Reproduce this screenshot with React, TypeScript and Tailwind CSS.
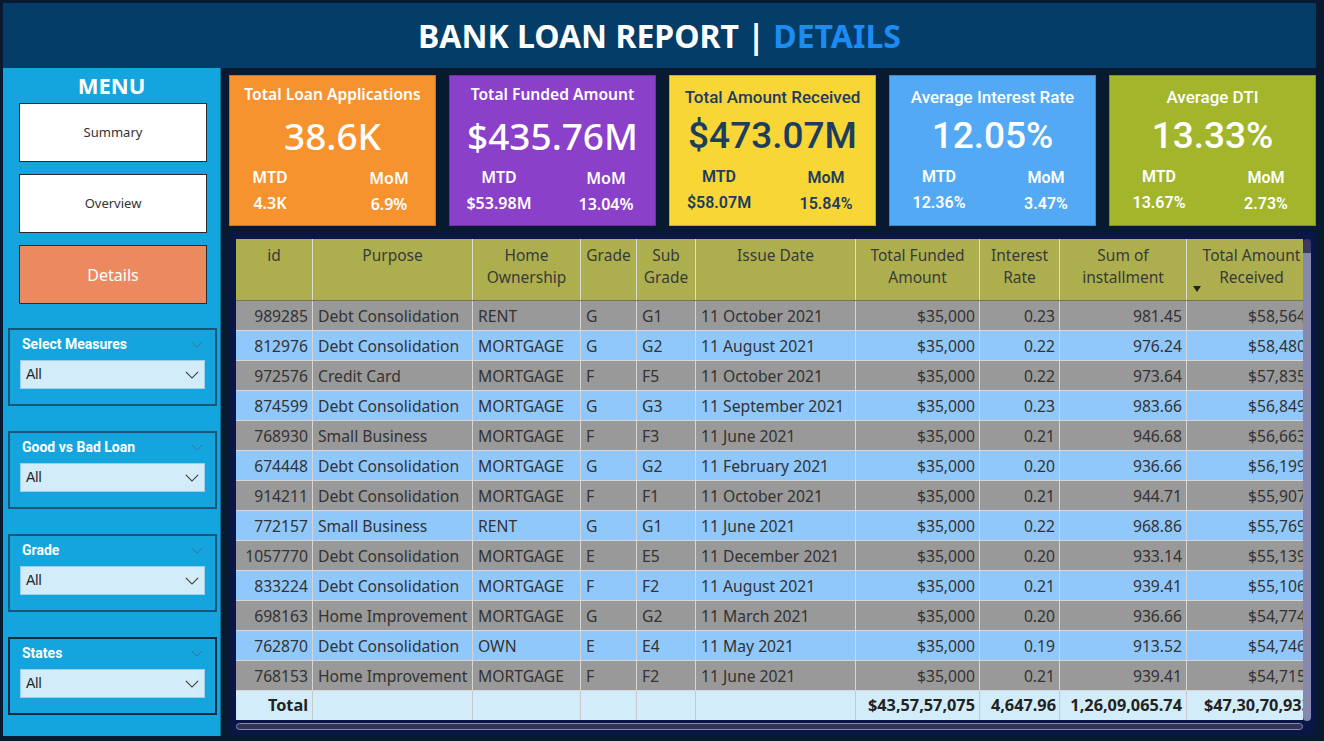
import React from "react";

type Row = [string, string, string, string, string, string, string, string, string, string];

const rows: Row[] = [
  ["989285", "Debt Consolidation", "RENT", "G", "G1", "11 October 2021", "$35,000", "0.23", "981.45", "$58,564"],
  ["812976", "Debt Consolidation", "MORTGAGE", "G", "G2", "11 August 2021", "$35,000", "0.22", "976.24", "$58,480"],
  ["972576", "Credit Card", "MORTGAGE", "F", "F5", "11 October 2021", "$35,000", "0.22", "973.64", "$57,835"],
  ["874599", "Debt Consolidation", "MORTGAGE", "G", "G3", "11 September 2021", "$35,000", "0.23", "983.66", "$56,849"],
  ["768930", "Small Business", "MORTGAGE", "F", "F3", "11 June 2021", "$35,000", "0.21", "946.68", "$56,663"],
  ["674448", "Debt Consolidation", "MORTGAGE", "G", "G2", "11 February 2021", "$35,000", "0.20", "936.66", "$56,199"],
  ["914211", "Debt Consolidation", "MORTGAGE", "F", "F1", "11 October 2021", "$35,000", "0.21", "944.71", "$55,907"],
  ["772157", "Small Business", "RENT", "G", "G1", "11 June 2021", "$35,000", "0.22", "968.86", "$55,769"],
  ["1057770", "Debt Consolidation", "MORTGAGE", "E", "E5", "11 December 2021", "$35,000", "0.20", "933.14", "$55,139"],
  ["833224", "Debt Consolidation", "MORTGAGE", "F", "F2", "11 August 2021", "$35,000", "0.21", "939.41", "$55,106"],
  ["698163", "Home Improvement", "MORTGAGE", "G", "G2", "11 March 2021", "$35,000", "0.20", "936.66", "$54,774"],
  ["762870", "Debt Consolidation", "OWN", "E", "E4", "11 May 2021", "$35,000", "0.19", "913.52", "$54,746"],
  ["768153", "Home Improvement", "MORTGAGE", "F", "F2", "11 June 2021", "$35,000", "0.21", "939.41", "$54,715"],
];

// right aligned columns
const rightCols = [0, 6, 7, 8, 9];
const cols = "grid grid-cols-[77px_160px_108px_56px_59px_160px_124px_80px_127px_130px]";

const headers = [
  ["id"],
  ["Purpose"],
  ["Home", "Ownership"],
  ["Grade"],
  ["Sub", "Grade"],
  ["Issue Date"],
  ["Total Funded", "Amount"],
  ["Interest", "Rate"],
  ["Sum of", "installment"],
  ["Total Amount", "Received"],
];

const Chevron = ({ className }: { className: string }) => (
  <svg width="16" height="9" viewBox="0 0 16 9" className={className}>
    <path d="M1 1l7 7 7-7" fill="none" stroke="currentColor" strokeWidth="1.2" />
  </svg>
);

type KpiProps = {
  title: string;
  value: string;
  mtd: string;
  mom: string;
  bg: string;
  text: string;
  din?: boolean;
  pad: string;
};

const Kpi = ({ title, value, mtd, mom, bg, text, din, pad }: KpiProps) => {
  const font = din ? "font-['Roboto',sans-serif]" : "font-['Noto_Sans',sans-serif]";
  return (
    <div className={`w-[207px] h-[151px] border border-black/20 flex flex-col ${bg} ${text} ${font}`}>
      <div
        className={`text-center leading-[22px] ${din ? "pt-[10px] text-[17px] font-medium" : "pt-[7px] text-[15.6px] font-semibold"}`}
      >
        {title}
      </div>
      <div className={`text-center leading-[48px] text-[37px] ${din ? "mt-[4px] font-medium" : "mt-[7px] font-medium"}`}>
        {value}
      </div>
      <div className={`flex justify-between mt-[7px] ${pad}`}>
        <div className="flex flex-col items-center w-[80px]">
          <span className="text-[16px] font-semibold leading-[20px]">MTD</span>
          <span className="text-[16px] font-semibold leading-[20px] mt-[6px]">{mtd}</span>
        </div>
        <div className="flex flex-col items-center w-[80px]">
          <span className="text-[16px] font-semibold leading-[20px] mt-[1px]">MoM</span>
          <span className="text-[16px] font-semibold leading-[20px] mt-[6px]">{mom}</span>
        </div>
      </div>
    </div>
  );
};

const Filter = ({ label, dark }: { label: string; dark?: boolean }) => (
  <div
    className={`ml-[5px] w-[209px] h-[78px] border-2 ${dark ? "border-[#0d2c40]" : "border-[#1a5576]"} px-[10px] pt-[4px]`}
  >
    <div className="flex items-center justify-between pl-[2px] pr-[2px]">
      <span className="font-['Roboto',sans-serif] font-bold text-[14px] leading-[20px] text-white">{label}</span>
      <Chevron className="text-[#3c6f8e] w-[12px] h-[7px]" />
    </div>
    <div className="mt-[6px] h-[29px] bg-[#d3ecf9] border border-[#9fd0ea] flex items-center justify-between pl-[5px] pr-[5px]">
      <span className="font-['Liberation_Sans',sans-serif] text-[14px] text-[#222]">All</span>
      <Chevron className="text-[#333] w-[14px] h-[8px]" />
    </div>
  </div>
);

const MenuButton = ({ label, active }: { label: string; active?: boolean }) => (
  <div
    className={`ml-[16px] mr-[13px] h-[59px] flex items-center justify-center border border-[#2b2b2b] ${
      active ? "bg-[#ec8a5f] text-white text-[16px]" : "bg-white text-[#333] text-[13px]"
    }`}
  >
    {label}
  </div>
);

export default function App() {
  return (
    <div className="w-[1324px] h-[741px] bg-[#071a2f] pt-[3px] pl-[3px] overflow-hidden font-['Noto_Sans',sans-serif]">
      <div className="w-[1313px] h-[65px] bg-[#043d68] flex items-center justify-center">
        <h1 className="text-[32px] font-bold text-white">
          BANK LOAN REPORT | <span className="text-[#1c8cf3]">DETAILS</span>
        </h1>
      </div>

      <div className="flex w-[1313px]">
        <aside className="w-[218px] h-[668px] bg-[#14a5df] border-r border-[#0e6f9b] flex flex-col">
          <div className="h-[35px] flex items-center justify-center text-[22px] font-bold text-white">MENU</div>
          <div className="flex flex-col gap-[12px]">
            <MenuButton label="Summary" />
            <MenuButton label="Overview" />
            <MenuButton label="Details" active />
          </div>
          <div className="flex flex-col gap-[25px] mt-[24px]">
            <Filter label="Select Measures" />
            <Filter label="Good vs Bad Loan" />
            <Filter label="Grade" />
            <Filter label="States" dark />
          </div>
        </aside>

        <main className="flex-1 pl-[8px] pt-[7px]">
          <div className="flex justify-between">
            <Kpi title="Total Loan Applications" value="38.6K" mtd="4.3K" mom="6.9%" bg="bg-[#f7932f]" text="text-white" pad="pl-[-3px] pr-[6px]" />
            <Kpi title="Total Funded Amount" value="$435.76M" mtd="$53.98M" mom="13.04%" bg="bg-[#8a40c9]" text="text-white" pad="px-[9px]" />
            <Kpi title="Total Amount Received" value="$473.07M" mtd="$58.07M" mom="15.84%" bg="bg-[#f7d636]" text="text-[#1d3d5e]" din pad="px-[9px]" />
            <Kpi title="Average Interest Rate" value="12.05%" mtd="12.36%" mom="3.47%" bg="bg-[#53a9f4]" text="text-white" din pad="px-[9px]" />
            <Kpi title="Average DTI" value="13.33%" mtd="13.67%" mom="2.73%" bg="bg-[#a3b52a]" text="text-white" din pad="px-[9px]" />
          </div>

          <div className="mt-[6px] h-[503px] bg-[#0a1646] pl-[7px] pt-[7px]">
            <div className="flex">
              <div className="w-[1067px] h-[481px] overflow-hidden text-[#333] text-[15.7px]">
                <div className={`${cols} h-[62px] bg-[#adaf4e] border-b border-[#77774f]`}>
                  {headers.map((h, i) => (
                    <div
                      key={i}
                      className="relative border-r border-[#deded0] text-center text-[15.5px] leading-[22px] pt-[5px] text-[#3a3a3a] whitespace-nowrap"
                    >
                      {h.map((l) => (
                        <div key={l}>{l}</div>
                      ))}
                      {i === 9 && (
                        <span className="absolute left-[6px] bottom-[8px] w-0 h-0 border-l-[4px] border-r-[4px] border-t-[6px] border-l-transparent border-r-transparent border-t-[#222]" />
                      )}
                    </div>
                  ))}
                </div>
                {rows.map((r, ri) => (
                  <div
                    key={ri}
                    className={`${cols} h-[30px] border-b border-[#d5d8dc] ${ri % 2 === 0 ? "bg-[#999999]" : "bg-[#90c8fb]"}`}
                  >
                    {r.map((c, ci) => (
                      <div
                        key={ci}
                        className={`border-r border-[#d5d5d5] leading-[29px] pt-[1px] whitespace-nowrap overflow-hidden ${
                          ci === 9 ? "text-right pr-[10px]" : rightCols.includes(ci) ? "text-right pr-[4px]" : "pl-[5px]"
                        }`}
                      >
                        {c}
                      </div>
                    ))}
                  </div>
                ))}
                <div className={`${cols} h-[29px] bg-[#d3ecf9] font-bold text-[#222] text-[16.3px]`}>
                  <div className="border-r border-[#c8c8c8] text-right pr-[4px] leading-[29px]">Total</div>
                  <div className="border-r border-[#c8c8c8]" />
                  <div className="border-r border-[#c8c8c8]" />
                  <div className="border-r border-[#c8c8c8]" />
                  <div className="border-r border-[#c8c8c8]" />
                  <div className="border-r border-[#c8c8c8]" />
                  <div className="border-r border-[#c8c8c8] text-right pr-[4px] leading-[29px]">$43,57,57,075</div>
                  <div className="border-r border-[#c8c8c8] text-right pr-[3px] leading-[29px]">4,647.96</div>
                  <div className="border-r border-[#c8c8c8] text-right pr-[4px] leading-[29px]">1,26,09,065.74</div>
                  <div className="text-right pr-[6px] leading-[29px] whitespace-nowrap">$47,30,70,933</div>
                </div>
              </div>
              <div className="w-[8px] h-[482px] flex flex-col">
                <div className="h-[14px] bg-[#3a3a62] rounded-t-[4px]" />
                <div className="flex-1 bg-[#8788ad] rounded-b-[4px]" />
              </div>
            </div>
            <div className="mt-[2px] w-[1067px] h-[7px] bg-[#33345a] border border-[#8788ad] rounded-[4px]" />
          </div>
        </main>
      </div>
    </div>
  );
}
